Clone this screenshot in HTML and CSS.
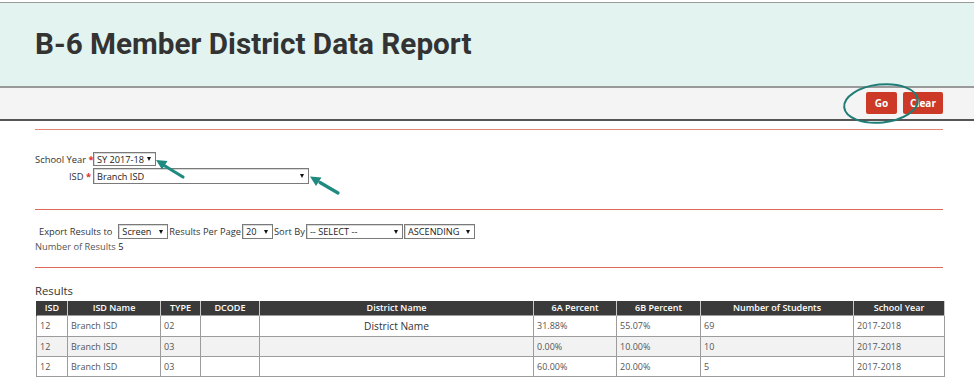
FILE: index.html
```html
<!DOCTYPE html>
<html lang="en">
<head>
<meta charset="utf-8">
<title>B-6 Member District Data Report</title>
<link rel="stylesheet" href="styles.css">
</head>
<body>
<header class="banner">
  <h1 class="title">B-6 Member District Data Report</h1>
</header>
<div class="toolbar">
  <button class="btn btn-go" type="button">Go</button>
  <button class="btn btn-clear" type="button">Clear</button>
</div>
<main class="content">
  <div class="rule rule-top"></div>
  <div class="criteria">
    <label class="crit-label">School Year <span class="req">*</span></label>
    <div class="select sel-sy"><span class="sel-text">SY 2017-18</span><span class="caret"></span></div>
    <label class="crit-label">ISD <span class="req">*</span></label>
    <div class="select sel-isd"><span class="sel-text">Branch ISD</span><span class="caret"></span></div>
  </div>
  <div class="rule rule-mid"></div>
  <div class="export-row">
    <span class="exp-label">Export Results to</span>
    <div class="select sel-screen"><span class="sel-text">Screen</span><span class="caret"></span></div>
    <span>Results Per Page</span>
    <div class="select sel-per"><span class="sel-text">20</span><span class="caret"></span></div>
    <span>Sort By</span>
    <div class="select sel-sort"><span class="sel-text">-- SELECT --</span><span class="caret"></span></div>
    <div class="select sel-order"><span class="sel-text">ASCENDING</span><span class="caret"></span></div>
  </div>
  <div class="count">Number of Results <span class="count-num">5</span></div>
  <div class="rule rule-low"></div>
  <h2 class="results-title">Results</h2>
  <table class="results">
    <colgroup>
      <col class="c-isd"><col class="c-name"><col class="c-type"><col class="c-dcode"><col class="c-dist">
      <col class="c-6a"><col class="c-6b"><col class="c-num"><col class="c-sy">
    </colgroup>
    <thead>
      <tr>
        <th>ISD</th><th>ISD Name</th><th>TYPE</th><th>DCODE</th><th>District Name</th>
        <th>6A Percent</th><th>6B Percent</th><th>Number of Students</th><th>School Year</th>
      </tr>
    </thead>
    <tbody>
      <tr>
        <td>12</td><td>Branch ISD</td><td>02</td><td></td><td class="dist-center">District Name</td>
        <td>31.88%</td><td>55.07%</td><td>69</td><td>2017-2018</td>
      </tr>
      <tr class="alt">
        <td>12</td><td>Branch ISD</td><td>03</td><td></td><td></td>
        <td>0.00%</td><td>10.00%</td><td>10</td><td>2017-2018</td>
      </tr>
      <tr>
        <td>12</td><td>Branch ISD</td><td>03</td><td></td><td></td>
        <td>60.00%</td><td>20.00%</td><td>5</td><td>2017-2018</td>
      </tr>
    </tbody>
  </table>
</main>
<svg class="annotations" width="974" height="377" viewBox="0 0 974 377" aria-hidden="true">
  <ellipse cx="881" cy="103.5" rx="37" ry="19" transform="rotate(-6 881 103.5)" fill="none" stroke="#1f7d76" stroke-width="2"/>
  <line x1="183" y1="177" x2="165" y2="166" stroke="#1f8a80" stroke-width="3.2" stroke-linecap="round"/>
  <polygon points="156,160 167.5,161 162,169.5" fill="#1f8a80"/>
  <line x1="338" y1="193" x2="320" y2="182.5" stroke="#1f8a80" stroke-width="3.2" stroke-linecap="round"/>
  <polygon points="310,176.5 321.5,177.5 316,186" fill="#1f8a80"/>
</svg>
</body>
</html>
```
FILE: styles.css
```css
* { box-sizing: border-box; }

html, body {
  margin: 0;
  padding: 0;
  background: #ffffff;
}

body {
  position: relative;
  width: 974px;
  height: 377px;
  overflow: hidden;
  font-family: "Open Sans", "Liberation Sans", sans-serif;
  color: #333333;
}

.banner {
  margin-top: 2px;
  height: 86px;
  background: #e3f3f0;
  border-top: 1px solid #9a9a9a;
  border-bottom: 2px solid #9a9a9a;
  display: flex;
  align-items: center;
  padding: 0 0 2px 35px;
}

.title {
  margin: 0;
  font-family: Roboto, "Liberation Sans", sans-serif;
  font-weight: 700;
  font-size: 29.7px;
  line-height: 34px;
  color: #333333;
}

.toolbar {
  height: 33px;
  background: #f4f4f4;
  border-bottom: 2px solid #555555;
  display: flex;
  justify-content: flex-end;
  align-items: flex-start;
  gap: 6px;
  padding: 4px 31px 0 0;
}

.btn {
  height: 22px;
  border: none;
  border-radius: 2px;
  background: #cc3a27;
  color: #ffffff;
  font-family: "Open Sans", "Liberation Sans", sans-serif;
  font-weight: 700;
  font-size: 10px;
  padding: 0;
  cursor: pointer;
}

.btn-go { width: 31px; }
.btn-clear { width: 40px; }

.content {
  padding: 0 31px 0 35px;
}

.rule {
  height: 1px;
  background: #dd6a58;
}

.rule-top { margin-top: 8px; background: #e58676; }
.rule-mid { margin-top: 25px; }
.rule-low { margin-top: 14px; }

.criteria {
  display: grid;
  grid-template-columns: 56px auto;
  justify-content: start;
  column-gap: 2px;
  row-gap: 2px;
  margin-top: 22px;
  font-size: 9.4px;
}

.crit-label {
  text-align: right;
  line-height: 13px;
  white-space: nowrap;
  color: #333333;
  align-self: center;
}

.req {
  color: #d9342b;
  font-weight: 700;
}

.select {
  position: relative;
  display: inline-flex;
  align-items: center;
  height: 15px;
  border: 1px solid #7a7a7a;
  background: #ffffff;
  font-size: 9.2px;
  color: #222222;
  padding: 0 12px 0 3px;
  box-shadow: inset 1px 1px 0 #d8d8d8;
  white-space: nowrap;
  overflow: hidden;
}

.caret {
  position: absolute;
  right: 4px;
  top: 5px;
  width: 0;
  height: 0;
  border-left: 2.5px solid transparent;
  border-right: 2.5px solid transparent;
  border-top: 4px solid #111111;
}

.sel-sy { width: 63px; height: 14px; }
.sel-sy .caret { top: 4px; }
.sel-isd { width: 216px; height: 16px; }
.sel-screen { width: 50px; }
.sel-per { width: 31px; }
.sel-sort { width: 97px; }
.sel-order { width: 71px; }

.export-row {
  display: flex;
  align-items: center;
  margin-top: 14px;
  padding-left: 4px;
  font-size: 9.3px;
  color: #333333;
  gap: 1px;
  height: 15px;
}

.exp-label { margin-right: 5px; }

.count {
  margin-top: 2px;
  font-size: 9.3px;
  line-height: 12px;
  color: #555555;
}

.count-num { color: #222222; }

.results-title {
  margin: 15px 0 3px 0;
  font-size: 11.3px;
  line-height: 15px;
  font-weight: 400;
  color: #333333;
}

.results {
  border-collapse: collapse;
  table-layout: fixed;
  width: 908px;
  margin-left: 1px;
  font-size: 9px;
}

.c-isd { width: 31px; }
.c-name { width: 93px; }
.c-type { width: 40px; }
.c-dcode { width: 59px; }
.c-dist { width: 274px; }
.c-6a { width: 83px; }
.c-6b { width: 84px; }
.c-num { width: 153px; }
.c-sy { width: 91px; }

.results th {
  background: #3a3a3a;
  color: #ffffff;
  font-weight: 600;
  font-size: 9px;
  height: 14px;
  line-height: 12px;
  padding: 0;
  text-align: center;
  border-left: 1px solid #c8c8c8;
  border-right: 1px solid #c8c8c8;
}

.results th:first-child { border-left-color: #3a3a3a; }

.results td {
  height: 20px;
  padding: 0 3px;
  color: #555555;
  border: 1px solid #9c9c9c;
  white-space: nowrap;
}

.results tbody tr:first-child td { height: 21px; }

.results tr.alt td { background: #f2f2f2; }

.results td.dist-center {
  text-align: center;
  font-size: 10.2px;
  color: #333333;
}

.annotations {
  position: absolute;
  left: 0;
  top: 0;
  pointer-events: none;
}
```
